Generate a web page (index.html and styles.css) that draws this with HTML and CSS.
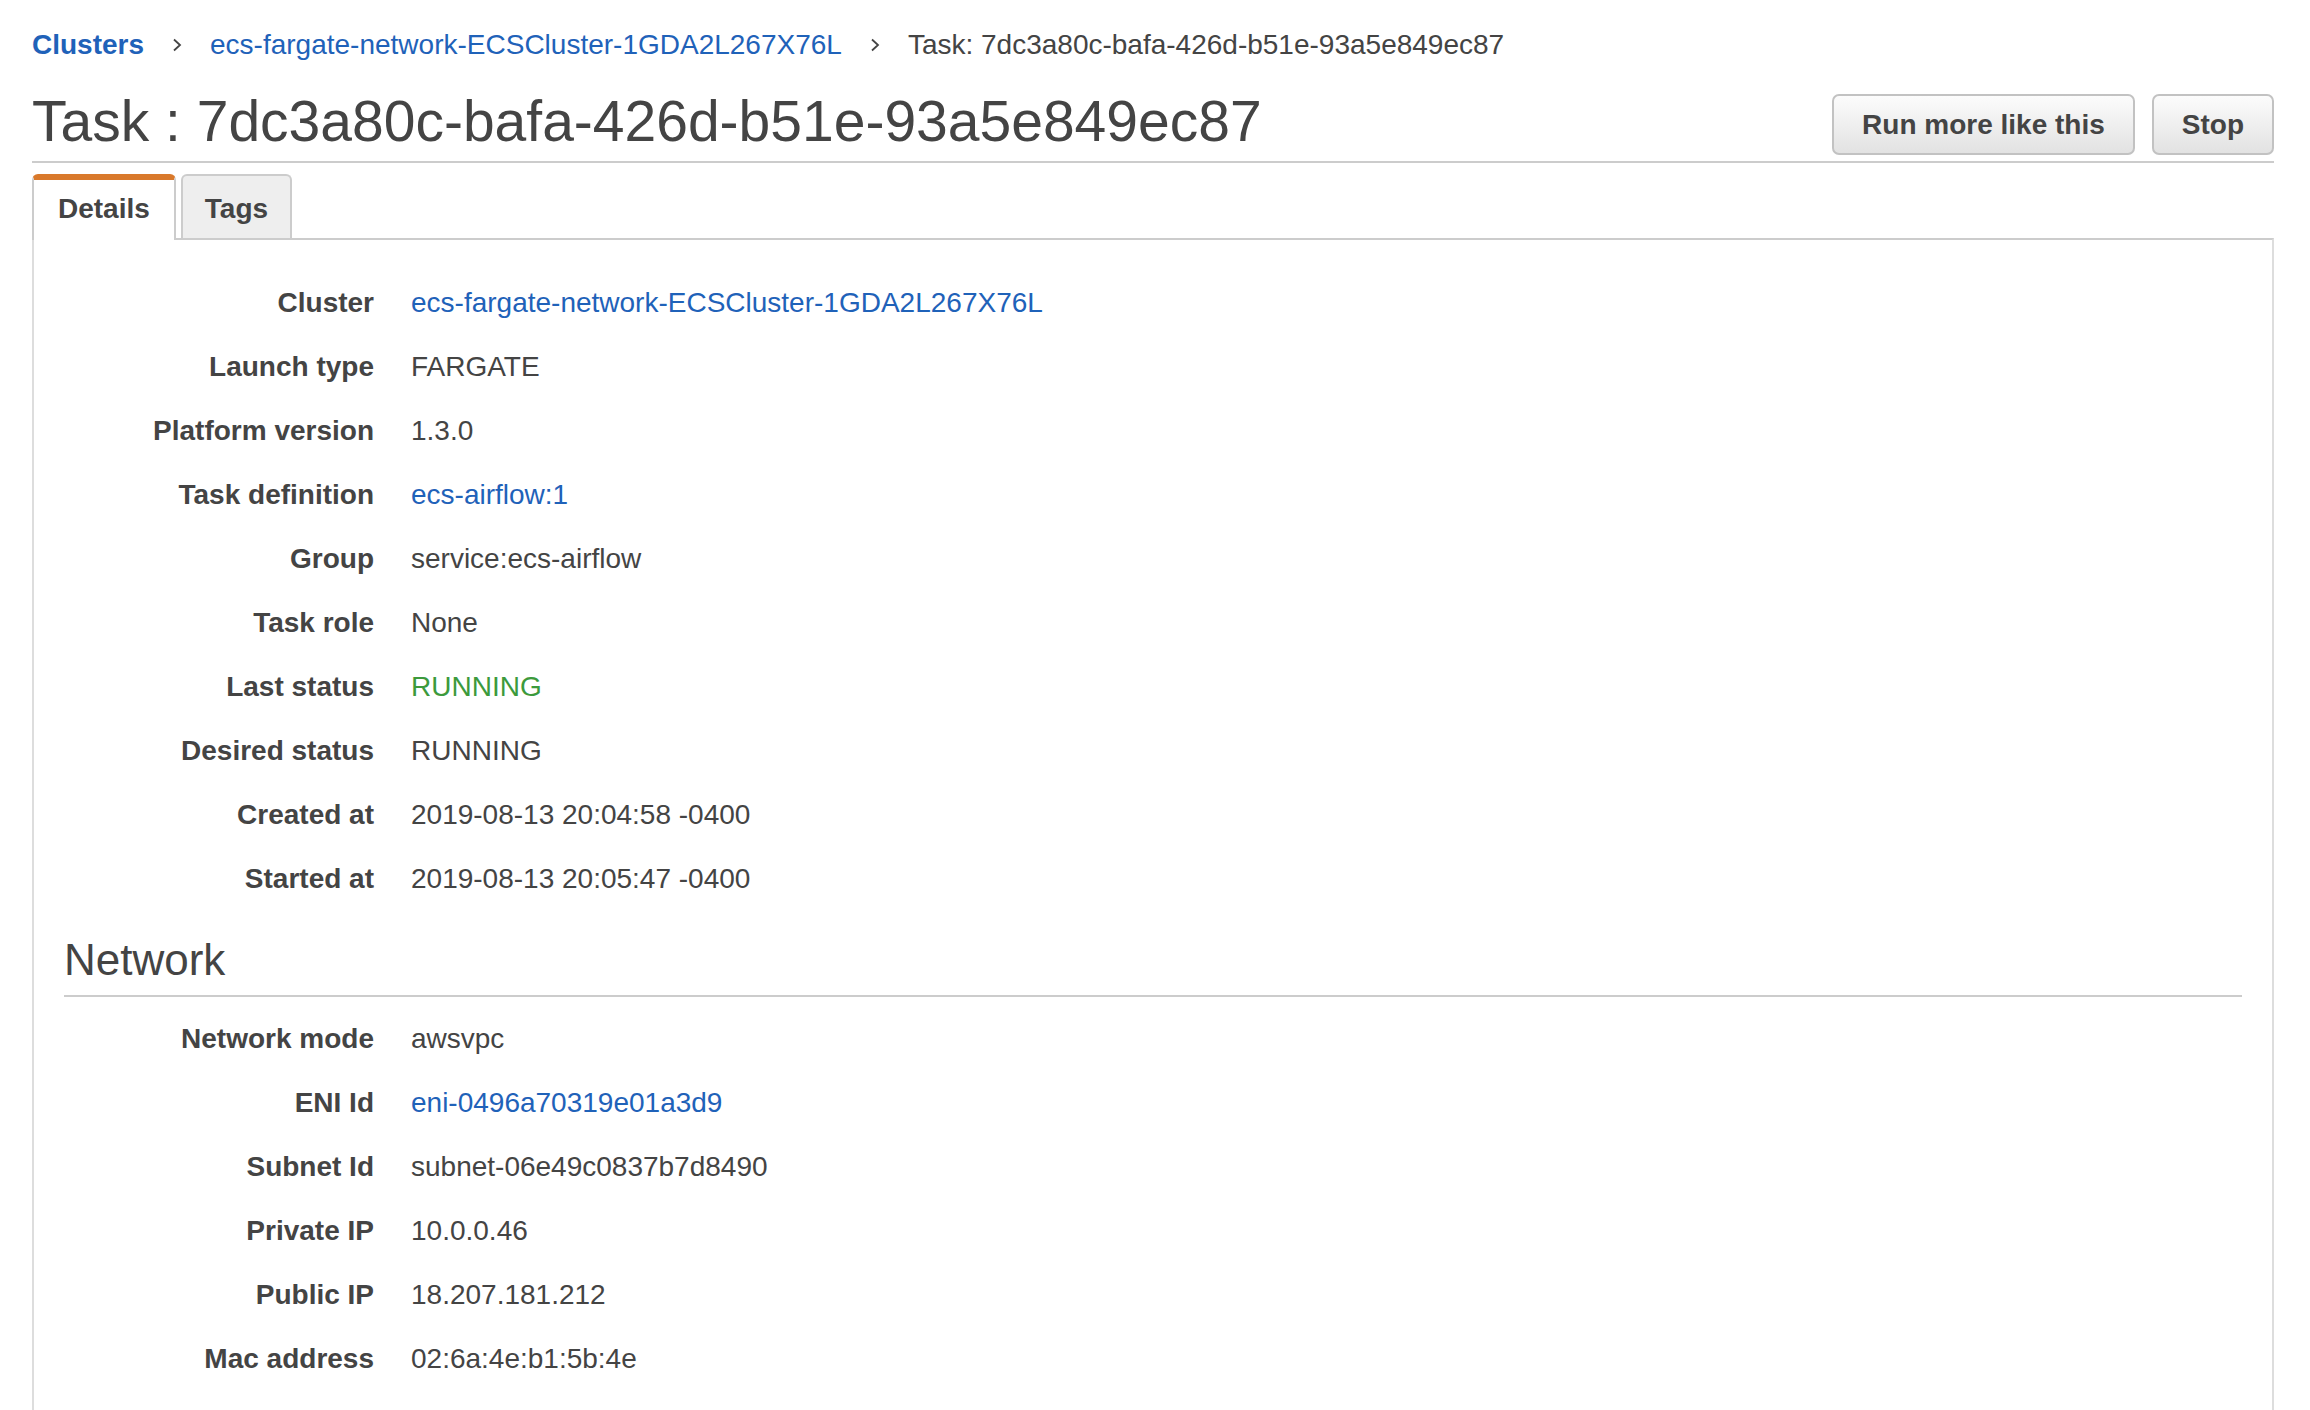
FILE: index.html
```html
<!DOCTYPE html>
<html lang="en">
<head>
<meta charset="utf-8">
<title>Task : 7dc3a80c-bafa-426d-b51e-93a5e849ec87</title>
<link rel="stylesheet" href="styles.css">
</head>
<body>
<div class="page">
  <nav class="crumbs">
    <a class="crumb crumb-root" href="#">Clusters</a>
    <svg class="chev" width="10" height="14" viewBox="0 0 10 14"><polyline points="2,1.5 8,7 2,12.5" fill="none" stroke="#444" stroke-width="1.8"/></svg>
    <a class="crumb" href="#">ecs-fargate-network-ECSCluster-1GDA2L267X76L</a>
    <svg class="chev" width="10" height="14" viewBox="0 0 10 14"><polyline points="2,1.5 8,7 2,12.5" fill="none" stroke="#444" stroke-width="1.8"/></svg>
    <span class="crumb-current">Task: 7dc3a80c-bafa-426d-b51e-93a5e849ec87</span>
  </nav>

  <header class="title-row">
    <h1 class="title">Task : 7dc3a80c-bafa-426d-b51e-93a5e849ec87</h1>
    <div class="actions">
      <button class="btn">Run more like this</button>
      <button class="btn">Stop</button>
    </div>
  </header>

  <div class="tabs">
    <div class="tab tab-active">Details</div>
    <div class="tab">Tags</div>
  </div>

  <section class="panel">
    <dl class="props">
      <div class="prop"><dt>Cluster</dt><dd><a href="#">ecs-fargate-network-ECSCluster-1GDA2L267X76L</a></dd></div>
      <div class="prop"><dt>Launch type</dt><dd>FARGATE</dd></div>
      <div class="prop"><dt>Platform version</dt><dd>1.3.0</dd></div>
      <div class="prop"><dt>Task definition</dt><dd><a href="#">ecs-airflow:1</a></dd></div>
      <div class="prop"><dt>Group</dt><dd>service:ecs-airflow</dd></div>
      <div class="prop"><dt>Task role</dt><dd>None</dd></div>
      <div class="prop"><dt>Last status</dt><dd class="ok">RUNNING</dd></div>
      <div class="prop"><dt>Desired status</dt><dd>RUNNING</dd></div>
      <div class="prop"><dt>Created at</dt><dd>2019-08-13 20:04:58 -0400</dd></div>
      <div class="prop"><dt>Started at</dt><dd>2019-08-13 20:05:47 -0400</dd></div>
    </dl>

    <h2 class="section-title">Network</h2>

    <dl class="props">
      <div class="prop"><dt>Network mode</dt><dd>awsvpc</dd></div>
      <div class="prop"><dt>ENI Id</dt><dd><a href="#">eni-0496a70319e01a3d9</a></dd></div>
      <div class="prop"><dt>Subnet Id</dt><dd>subnet-06e49c0837b7d8490</dd></div>
      <div class="prop"><dt>Private IP</dt><dd>10.0.0.46</dd></div>
      <div class="prop"><dt>Public IP</dt><dd>18.207.181.212</dd></div>
      <div class="prop"><dt>Mac address</dt><dd>02:6a:4e:b1:5b:4e</dd></div>
    </dl>
  </section>
</div>
</body>
</html>
```

FILE: styles.css
```css
html, body {
  margin: 0;
  padding: 0;
  background: #ffffff;
}

body {
  font-family: "Liberation Sans", Arial, Helvetica, sans-serif;
  color: #444444;
  font-size: 28px;
}

a {
  color: #1f62b9;
  text-decoration: none;
}

.page {
  padding: 25px 36px 0 32px;
}

/* breadcrumb */
.crumbs {
  display: flex;
  align-items: center;
  height: 40px;
  line-height: 40px;
  font-size: 28px;
  white-space: nowrap;
}

.crumb-root {
  font-weight: bold;
}

.chev {
  display: block;
  margin: 0 28px;
  flex: none;
}

.crumb-current {
  color: #444444;
}

/* title */
.title-row {
  display: flex;
  justify-content: space-between;
  align-items: flex-start;
  margin-top: 25px;
  height: 71px;
  border-bottom: 2px solid #cccccc;
}

.title {
  margin: 0;
  font-size: 57px;
  font-weight: normal;
  line-height: 62px;
  white-space: nowrap;
}

.actions {
  display: flex;
  gap: 17px;
  margin-top: 4px;
}

.btn {
  box-sizing: border-box;
  height: 61px;
  padding: 0 28px;
  border: 2px solid #c2c2c2;
  border-radius: 7px;
  background: linear-gradient(#fcfcfc, #e2e2e2);
  font-family: "Liberation Sans", Arial, Helvetica, sans-serif;
  font-size: 28px;
  font-weight: bold;
  color: #444444;
  line-height: 57px;
  cursor: pointer;
}

/* tabs */
.tabs {
  display: flex;
  align-items: flex-start;
  gap: 5px;
  margin-top: 11px;
  margin-bottom: -2px;
  position: relative;
  z-index: 1;
  height: 66px;
}

.tab {
  box-sizing: border-box;
  height: 64px;
  padding: 5px 22px 1px;
  line-height: 56px;
  font-weight: bold;
  border: 2px solid #cccccc;
  border-bottom: none;
  border-radius: 6px 6px 0 0;
  background: #eeeeee;
}

.tab-active {
  height: 66px;
  padding: 1px 24px 3px;
  border-top: 6px solid #d9792b;
  background: #ffffff;
}

/* panel */
.panel {
  border-top: 2px solid #cccccc;
  border-left: 2px solid #dddddd;
  border-right: 2px solid #dddddd;
  padding: 31px 0 60px;
}

.props {
  margin: 0;
}

.prop {
  display: grid;
  grid-template-columns: 340px 1fr;
  column-gap: 37px;
  height: 64px;
  line-height: 64px;
}

.prop dt {
  font-weight: bold;
  text-align: right;
  white-space: nowrap;
}

.prop dd {
  margin: 0;
  white-space: nowrap;
}

.prop dd.ok {
  color: #3c9a3c;
}

.section-title {
  margin: 23px 30px 10px;
  padding: 0 0 9px;
  font-size: 44px;
  font-weight: normal;
  line-height: 52px;
  border-bottom: 2px solid #cccccc;
}
```
